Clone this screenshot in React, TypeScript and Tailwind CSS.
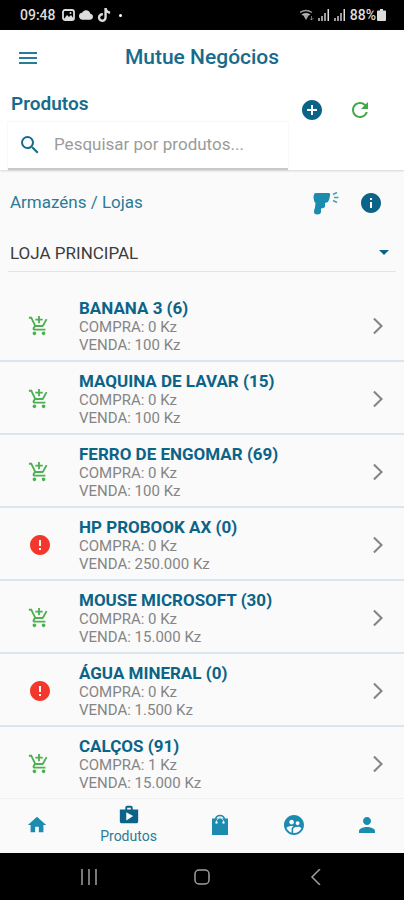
import { useState } from "react";
import {
    MdAddCircle,
    MdAddShoppingCart,
    MdArrowDropDown,
    MdArrowForwardIos,
    MdCloud,
    MdError,
    MdHome,
    MdInfo,
    MdMenu,
    MdPerson,
    MdRefresh,
    MdSearch,
    MdShop,
    MdSupervisedUserCircle,
} from "react-icons/md";
import { FaTiktok } from "react-icons/fa";

const products = [
    { name: "BANANA 3", stock: 6, buy: "0", sell: "100" },
    { name: "MAQUINA DE LAVAR", stock: 15, buy: "0", sell: "100" },
    { name: "FERRO DE ENGOMAR", stock: 69, buy: "0", sell: "100" },
    { name: "HP PROBOOK AX", stock: 0, buy: "0", sell: "250.000" },
    { name: "MOUSE MICROSOFT", stock: 30, buy: "0", sell: "15.000" },
    { name: "ÁGUA MINERAL", stock: 0, buy: "0", sell: "1.500" },
    { name: "CALÇOS", stock: 91, buy: "1", sell: "15.000" },
];

function SignalIcon() {
    return (
        <svg viewBox="0 0 12 12" className="size-3" fill="currentColor" aria-hidden="true">
            <path d="M0 9h2v3H0zM3 7h2v5H3z" opacity=".7" />
            <path d="M6 4h2v8H6z" opacity=".7" />
            <path d="M9.500 0h1.500v12H9.500z" />
        </svg>
    );
}

function StatusBar() {
    return (
        <div className="flex h-[30px] items-center justify-between bg-black pl-5 pr-[18px] text-[#dcdcdc]">
            <div className="flex items-center gap-1">
                <span className="text-sm font-medium mr-0.5">09:48</span>
                <svg viewBox="0 0 13 12" className="h-3 w-[13px]" aria-hidden="true">
                    <rect x="1" y="1" width="11" height="10" rx="2" fill="none" stroke="currentColor" strokeWidth="1.800" />
                    <path d="M2 10l3-4 2 2 2-2 3 4z" fill="currentColor" />
                    <circle cx="8.500" cy="4" r="1" fill="currentColor" />
                </svg>
                <MdCloud size={14} />
                <FaTiktok size={14} />
                <span className="ml-1 size-[3px] rounded-full bg-white" />
            </div>
            <div className="flex items-center gap-1">
                <svg viewBox="0 0 14 12" className="h-3 w-3.5" fill="none" stroke="currentColor" aria-hidden="true">
                    <path d="M0 3.500q6-4 12 0M2 6q4-3 8 0" strokeWidth="1.500" opacity=".7" />
                    <path d="M2.500 5h7l-3.500 6z" fill="currentColor" stroke="none" opacity=".75" />
                    <path d="M11.500 7v4M10 9.500l1.500 1.500 2-2" opacity=".5" />
                </svg>
                <SignalIcon />
                <SignalIcon />
                <div className="flex items-center gap-px">
                    <span className="text-sm font-medium">88%</span>
                    <svg viewBox="0 0 9 12" className="h-3 w-[9px]" fill="currentColor" aria-hidden="true">
                        <path d="M3 0h3v1.500h2a1 1 0 0 1 1 1V11a1 1 0 0 1-1 1H1a1 1 0 0 1-1-1V2.500a1 1 0 0 1 1-1h2z" />
                    </svg>
                </div>
            </div>
        </div>
    );
}

function ScannerIcon() {
    return (
        <svg viewBox="0 0 26 24" className="h-6 w-[26px]" aria-hidden="true">
            <path
                d="M3 2H15.500q2 0 1.700 1.500l-1 5Q15.500 11 13.500 11.500L12 12v2q.5 2.500-1.500 3l-2.500.5V20.500q0 3-3.500 3t-3.500-2.500q0-2 1-4.500l.5-4.500Q1 11 1 9L.5 7q0-5 2.500-5z"
                fill="#1b8bb0"
            />
            <path d="M20 3.500l4-2M21 6.500h4.500M20 9.500l4 2" fill="none" stroke="#4a9fb3" strokeWidth="1.500" />
        </svg>
    );
}

function BagIcon() {
    return (
        <svg viewBox="0 0 18 22" className="h-[22px] w-[18px]" aria-hidden="true">
            <path d="M1 4.500h16V21H1z" fill="currentColor" />
            <path d="M4.500 8V5.500Q5 1.500 9 1.500t4.500 4V8" fill="none" stroke="currentColor" strokeWidth="1.500" />
            <path d="M5.500 8V6.500L9 3l3.500 3.500V8" fill="none" stroke="#b5dfea" strokeWidth="1" />
            <circle cx="5.500" cy="8.500" r="1.200" fill="#e8f5f9" />
            <circle cx="12.500" cy="8.500" r="1.200" fill="#e8f5f9" />
        </svg>
    );
}

function ProductRow({ name, stock, buy, sell }: (typeof products)[number]) {
    return (
        <li className="border-b-2 border-[#dae6ed] last:border-b-0">
            <button className="flex h-[71px] w-full items-center pl-7 pr-4 text-left">
                <span className="mt-0.5 flex w-6 shrink-0">
                    {stock > 0 ? (
                        <MdAddShoppingCart size={22} className="text-[#4caf50]" />
                    ) : (
                        <MdError size={24} className="text-[#f3372c]" />
                    )}
                </span>
                <span className="flex flex-1 flex-col pl-[27px] pt-0.5">
                    <span className="text-[17px] leading-5 font-bold text-[#0b6487]">
                        {name} ({stock})
                    </span>
                    <span className="text-[15px] leading-[18px] text-[#858585]">COMPRA: {buy} Kz</span>
                    <span className="text-[15px] leading-[18px] text-[#858585]">VENDA: {sell} Kz</span>
                </span>
                <MdArrowForwardIos size={20} className="mt-0.5 text-[#858585]" />
            </button>
        </li>
    );
}

const tabs = [
    { label: "Início", icon: <MdHome size={22} /> },
    { label: "Produtos", icon: <MdShop size={22} /> },
    { label: "Vendas", icon: <BagIcon /> },
    { label: "Clientes", icon: <MdSupervisedUserCircle size={24} /> },
    { label: "Perfil", icon: <MdPerson size={24} /> },
];

function BottomTabs() {
    const [active, setActive] = useState("Produtos");
    return (
        <nav className="flex h-[55px] border-t border-[#f0f0f0] bg-[#fafafa] pb-0.5">
            {tabs.map((tab) => (
                <button
                    key={tab.label}
                    aria-label={tab.label}
                    onClick={() => setActive(tab.label)}
                    className={`flex flex-col items-center justify-center ${
                        active === tab.label ? "flex-[1.5] text-[#0b6487]" : "flex-1 text-[#1b8bb0]"
                    }`}
                >
                    {tab.icon}
                    {active === tab.label && <span className="text-sm leading-5 text-[#2a7b98]">{tab.label}</span>}
                </button>
            ))}
        </nav>
    );
}

function SystemBar() {
    return (
        <div className="flex h-[47px] items-center justify-around bg-black px-8 text-[#a0a0a0]">
            <button aria-label="Recentes">
                <svg viewBox="0 0 16 16" className="size-4" stroke="currentColor" strokeWidth="1.500">
                    <path d="M1 0v16M8 0v16M15 0v16" />
                </svg>
            </button>
            <button aria-label="Ecrã inicial">
                <svg viewBox="0 0 16 16" className="size-4" fill="none" stroke="currentColor" strokeWidth="1.500">
                    <rect x="1" y="1" width="14" height="14" rx="4" />
                </svg>
            </button>
            <button aria-label="Voltar">
                <svg viewBox="0 0 16 16" className="size-4" fill="none" stroke="currentColor" strokeWidth="1.500">
                    <path d="M13 0L5 8l8 8" />
                </svg>
            </button>
        </div>
    );
}

export default function App() {
    const [search, setSearch] = useState("");
    return (
        <div className="flex min-h-screen flex-col bg-[#fafafa] font-['Roboto',sans-serif]">
            <StatusBar />
            <header className="bg-white shadow-[0_1px_2px_rgba(0,0,0,0.15)]">
                <div className="grid h-14 grid-cols-[40px_1fr_40px] items-center px-4">
                    <button aria-label="Menu" className="text-[#2a7b98]">
                        <MdMenu size={24} />
                    </button>
                    <h1 className="text-center text-[21px] font-medium text-[#176b8c]">Mutue Negócios</h1>
                </div>
                <div className="flex pl-2">
                    <div className="w-[280px]">
                        <h2 className="h-9 pl-[3px] pt-1 text-[19px] leading-7 font-semibold text-[#176b8c]">Produtos</h2>
                        <label className="flex h-12 items-center gap-3 border-b-2 border-[#c8c8c8] pl-2.5 shadow-[0_0_2px_rgba(0,0,0,0.08)]">
                            <MdSearch size={24} className="shrink-0 text-[#176b8c]" />
                            <input
                                type="text"
                                aria-label="Pesquisar por produtos"
                                placeholder="Pesquisar por produtos..."
                                value={search}
                                onChange={(e) => setSearch(e.target.value)}
                                className="w-full text-[17px] outline-none placeholder:text-[#9b9b9b]"
                            />
                        </label>
                    </div>
                    <div className="flex h-12 flex-1 items-center justify-center gap-6 pr-5">
                        <button aria-label="Adicionar produto">
                            <MdAddCircle size={24} className="text-[#0b6487]" />
                        </button>
                        <button aria-label="Atualizar">
                            <MdRefresh size={24} className="text-[#43a84a]" />
                        </button>
                    </div>
                </div>
            </header>

            <main className="flex-1">
                <div className="px-2">
                    <div className="flex h-[66px] items-center justify-between pl-0.5 pr-[13px]">
                        <label htmlFor="store" className="text-[17px] text-[#2a7b98]">
                            Armazéns / Lojas
                        </label>
                        <div className="flex gap-5">
                            <button aria-label="Ler código de barras">
                                <ScannerIcon />
                            </button>
                            <button aria-label="Informações">
                                <MdInfo size={24} className="text-[#0b6487]" />
                            </button>
                        </div>
                    </div>
                    <div className="relative">
                        <select
                            id="store"
                            className="h-9 w-full appearance-none border-b border-[#e4e4e4] pl-0.5 text-[17px] text-[#3c3c3c] outline-none"
                        >
                            <option>LOJA PRINCIPAL</option>
                        </select>
                        <MdArrowDropDown size={24} className="pointer-events-none absolute right-0 top-1 text-[#0b6487]" />
                    </div>
                </div>
                <ul className="pt-[17px]">
                    {products.map((product) => (
                        <ProductRow key={product.name} {...product} />
                    ))}
                </ul>
            </main>

            <BottomTabs />
            <SystemBar />
        </div>
    );
}
